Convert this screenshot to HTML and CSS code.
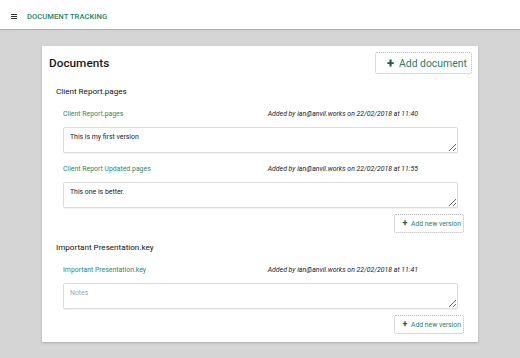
FILE: index.html
```html
<!DOCTYPE html>
<html>
<head>
<meta charset="utf-8">
<link rel="stylesheet" href="styles.css">
</head>
<body>
<header class="topbar">
  <svg class="menu-icon" width="6" height="5" viewBox="0 0 6 5"><rect x="0" y="0" width="6" height="1" fill="#333"/><rect x="0" y="2" width="6" height="1" fill="#333"/><rect x="0" y="4" width="6" height="1" fill="#333"/></svg>
  <span class="app-title">DOCUMENT TRACKING</span>
</header>
<main class="card">
  <div class="card-head">
    <h1 class="heading">Documents</h1>
    <button class="btn btn-large"><span class="plus">+</span><span>Add document</span></button>
  </div>

  <section class="doc">
    <div class="doc-title">Client Report.pages</div>
    <div class="versions">
      <div class="version">
        <div class="version-row"><a class="file-link">Client Report.pages</a><span class="meta">Added by ian@anvil.works on 22/02/2018 at 11:40</span></div>
        <textarea class="notes">This is my first version</textarea>
      </div>
      <div class="version">
        <div class="version-row"><a class="file-link">Client Report Updated.pages</a><span class="meta">Added by ian@anvil.works on 22/02/2018 at 11:55</span></div>
        <textarea class="notes">This one is better.</textarea>
      </div>
      <div class="actions"><button class="btn btn-small"><span class="plus">+</span><span>Add new version</span></button></div>
    </div>
  </section>

  <section class="doc doc-next">
    <div class="doc-title">Important Presentation.key</div>
    <div class="versions">
      <div class="version">
        <div class="version-row"><a class="file-link">Important Presentation.key</a><span class="meta">Added by ian@anvil.works on 22/02/2018 at 11:41</span></div>
        <textarea class="notes" placeholder="Notes"></textarea>
      </div>
      <div class="actions"><button class="btn btn-small"><span class="plus">+</span><span>Add new version</span></button></div>
    </div>
  </section>
</main>
</body>
</html>
```

FILE: styles.css
```css
* { box-sizing: border-box; }
html, body { margin: 0; padding: 0; }
body {
  background: #d5d5d5;
  font-family: Roboto, "Liberation Sans", sans-serif;
  color: #222;
  height: 358px;
  overflow: hidden;
}
.topbar {
  height: 29px;
  background: #fff;
  display: flex;
  align-items: center;
  padding: 3px 0 0 11px;
  box-shadow: 0 1px 1px rgba(0,0,0,0.18);
  position: relative;
}
.menu-icon { display: block; }
.app-title {
  margin-left: 10px;
  font-size: 7.6px;
  font-weight: 500;
  color: #22866a;
  letter-spacing: 0.05px;
}
.card {
  display: block;
  margin: 17px 42px 0 42px;
  background: #fff;
  padding: 6px 6px 8px 7px;
  box-shadow: 0 1px 2px rgba(0,0,0,0.2);
}
.card-head {
  display: flex;
  justify-content: space-between;
  align-items: center;
  height: 22px;
}
.heading {
  margin: 0;
  font-size: 11.8px;
  font-weight: 500;
  color: #1a1a1a;
}
.btn {
  background: #fff;
  border: 1px dotted #b5b5b5;
  border-radius: 2px;
  display: flex;
  align-items: center;
  font-family: Roboto, "Liberation Sans", sans-serif;
  color: #2a7f64;
  padding: 0;
  cursor: pointer;
}
.btn-large {
  width: 97px;
  height: 22px;
  font-size: 10.4px;
  padding-left: 6px;
}
.btn-large .plus {
  font-size: 13px;
  font-weight: 900;
  color: #1b5e46;
  width: 17px;
  line-height: 1;
  margin-top: -1px;
}
.btn-small {
  width: 70px;
  height: 19px;
  font-size: 6.8px;
  padding-left: 4px;
}
.btn-small .plus {
  font-size: 9px;
  font-weight: 900;
  color: #1d6a4f;
  width: 12px;
  line-height: 1;
  margin-top: -1px;
}
.doc { margin-top: 9px; }
.doc-next { margin-top: 6px; }
.doc-title {
  padding-left: 7px;
  height: 16px;
  line-height: 16px;
  font-size: 8.1px;
  font-weight: 400;
  color: #111;
}
.versions { padding: 0 8px 0 14px; }
.version { margin-top: 8px; }
.version + .version { margin-top: 9px; }
.version-row {
  display: flex;
  justify-content: space-between;
  align-items: center;
  height: 14px;
  margin-right: 46px;
}
.file-link {
  font-size: 6.9px;
  color: #2a8a6c;
}
.meta {
  font-size: 6.9px;
  font-style: italic;
  color: #222;
}
.notes {
  display: block;
  margin-top: 6px;
  width: calc(100% - 6px);
  height: 26px;
  border: 1px solid #dcdcdc;
  border-radius: 2px;
  box-shadow: 0 1px 1px rgba(0,0,0,0.06);
  padding: 5px 6px;
  font-family: Roboto, "Liberation Sans", sans-serif;
  font-size: 6.9px;
  color: #222;
  resize: vertical;
  outline: none;
}
.notes::placeholder { color: #a8a8a8; }
.actions {
  display: flex;
  justify-content: flex-end;
  margin-top: 6px;
}
```
